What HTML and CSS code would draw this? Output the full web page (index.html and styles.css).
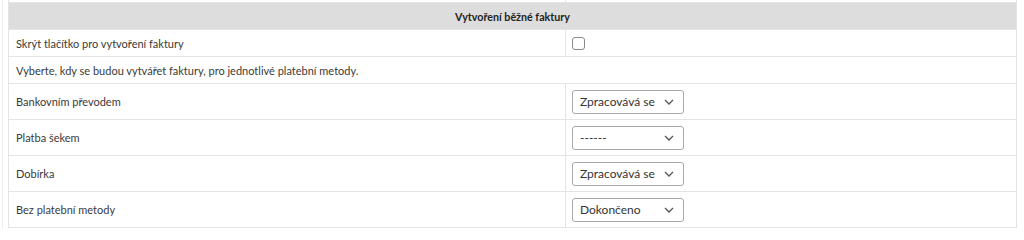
FILE: index.html
```html
<!DOCTYPE html>
<html lang="cs">
<head>
<meta charset="utf-8">
<link rel="stylesheet" href="styles.css">
</head>
<body>
<div class="wrap">
<table class="settings">
  <colgroup><col class="c1"><col class="c2"></colgroup>
  <tr class="prev"><td></td><td></td></tr>
  <tr class="head"><th colspan="2">Vytvoření běžné faktury</th></tr>
  <tr class="short"><td>Skrýt tlačítko pro vytvoření faktury</td><td><span class="check"></span></td></tr>
  <tr class="short"><td colspan="2">Vyberte, kdy se budou vytvářet faktury, pro jednotlivé platební metody.</td></tr>
  <tr class="tall"><td>Bankovním převodem</td><td><div class="select"><span>Zpracovává se</span><svg class="chev" viewBox="0 0 10 6" width="10" height="6"><path d="M1 1l4 4 4-4" fill="none" stroke="#555" stroke-width="1.3"/></svg></div></td></tr>
  <tr class="tall"><td>Platba šekem</td><td><div class="select"><span>------</span><svg class="chev" viewBox="0 0 10 6" width="10" height="6"><path d="M1 1l4 4 4-4" fill="none" stroke="#555" stroke-width="1.3"/></svg></div></td></tr>
  <tr class="tall"><td>Dobírka</td><td><div class="select"><span>Zpracovává se</span><svg class="chev" viewBox="0 0 10 6" width="10" height="6"><path d="M1 1l4 4 4-4" fill="none" stroke="#555" stroke-width="1.3"/></svg></div></td></tr>
  <tr class="tall"><td>Bez platební metody</td><td><div class="select"><span>Dokončeno</span><svg class="chev" viewBox="0 0 10 6" width="10" height="6"><path d="M1 1l4 4 4-4" fill="none" stroke="#555" stroke-width="1.3"/></svg></div></td></tr>
</table>
</div>
</body>
</html>
```
FILE: styles.css
```css
html, body {
  margin: 0;
  padding: 0;
  background: #fff;
}
body {
  font-family: Lato, "Open Sans", "Liberation Sans", sans-serif;
  color: #3a3a3a;
}
.wrap {
  margin-left: 2px;
  border-left: 1px solid #ececec;
  padding-left: 5px;
  height: 229px;
  overflow: hidden;
}
.settings {
  width: 1008px;
  border-collapse: collapse;
  table-layout: fixed;
}
.c1 { width: 557px; }
.c2 { width: 451px; }
.settings td, .settings th {
  border: 1px solid #e4e4e4;
  padding: 0 0 0 7px;
  font-size: 11px;
  text-align: left;
  vertical-align: middle;
}
.prev td {
  height: 2px;
  border-top: none;
  padding: 0;
}
.head th {
  background: #dddddd;
  height: 26px;
  text-align: center;
  font-weight: 700;
  font-size: 10.7px;
  color: #222;
  padding: 0;
}
.short td { height: 26px; }
.tall td { height: 35px; }
.check {
  display: block;
  width: 11px;
  height: 11px;
  border: 1px solid #8a8a8a;
  border-radius: 3px;
  margin-left: -1px;
  margin-top: 1px;
}
.select {
  box-sizing: border-box;
  width: 112px;
  height: 24px;
  border: 1px solid #a9a9a9;
  border-radius: 3px;
  display: flex;
  align-items: center;
  justify-content: space-between;
  padding: 0 9px 0 7px;
  margin-left: -1px;
  font-size: 12px;
  color: #333;
  background: #fff;
}
.chev { display: block; }
```
